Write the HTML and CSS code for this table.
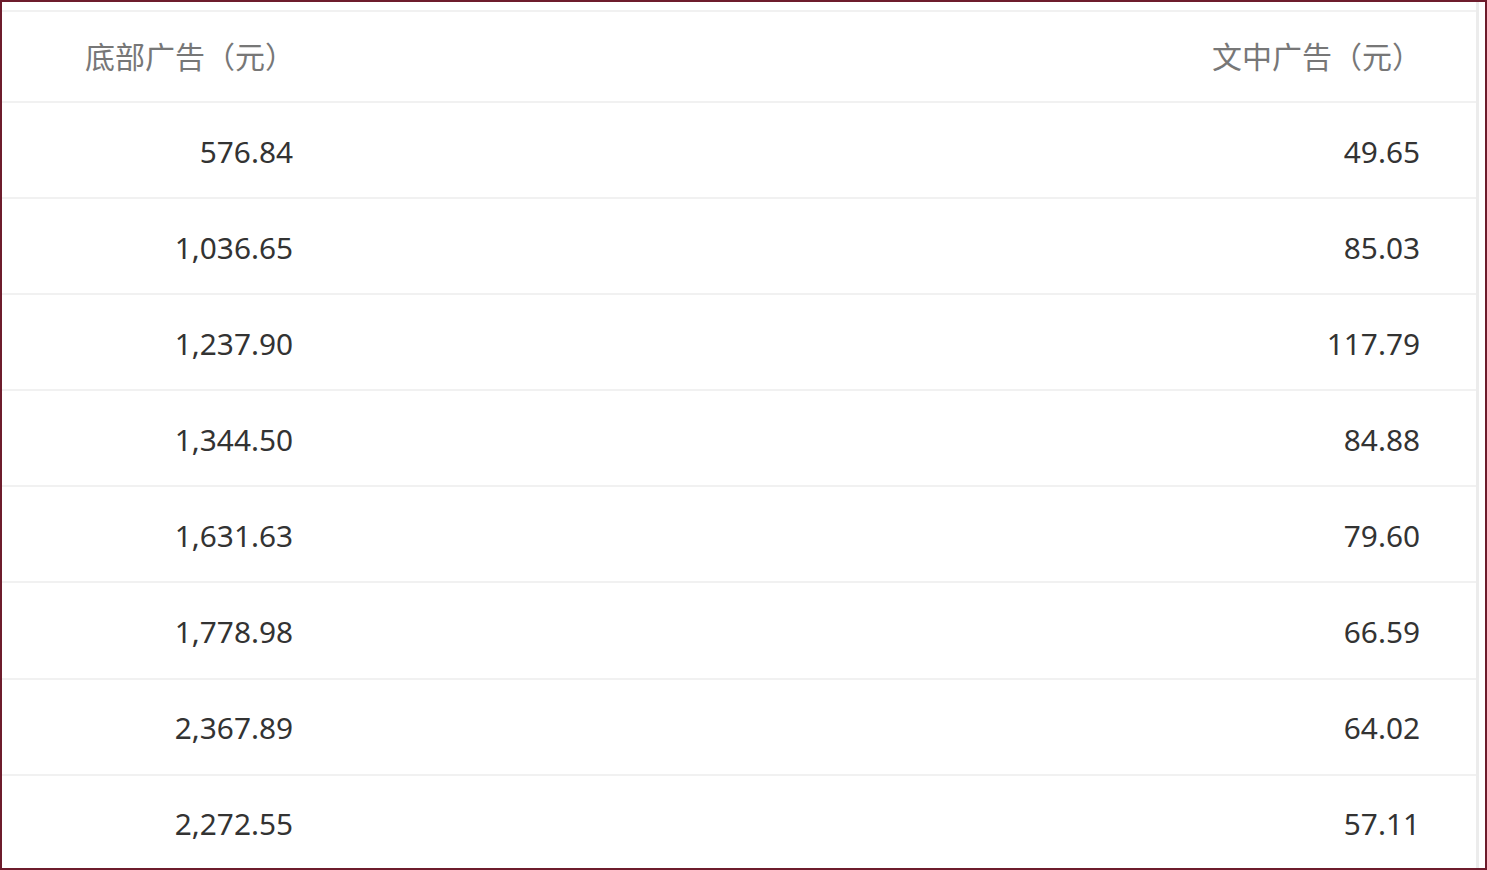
FILE: index.html
```html
<!DOCTYPE html>
<html lang="zh-CN">
<head>
<meta charset="utf-8">
<title>广告收入</title>
<link rel="stylesheet" href="styles.css">
</head>
<body>
<div class="frame">
  <div class="scroller">
    <div class="table">
      <div class="row head">
        <div class="cell left"><span class="hbox">底部广告（元）</span></div>
        <div class="cell right">文中广告（元）</div>
      </div>
      <div class="row"><div class="cell left"><span class="num">576.84</span></div><div class="cell right">49.65</div></div>
      <div class="row"><div class="cell left"><span class="num">1,036.65</span></div><div class="cell right">85.03</div></div>
      <div class="row"><div class="cell left"><span class="num">1,237.90</span></div><div class="cell right">117.79</div></div>
      <div class="row"><div class="cell left"><span class="num">1,344.50</span></div><div class="cell right">84.88</div></div>
      <div class="row"><div class="cell left"><span class="num">1,631.63</span></div><div class="cell right">79.60</div></div>
      <div class="row"><div class="cell left"><span class="num">1,778.98</span></div><div class="cell right">66.59</div></div>
      <div class="row"><div class="cell left"><span class="num">2,367.89</span></div><div class="cell right">64.02</div></div>
      <div class="row"><div class="cell left"><span class="num">2,272.55</span></div><div class="cell right">57.11</div></div>
    </div>
    <div class="gutter"></div>
  </div>
</div>
</body>
</html>
```
FILE: styles.css
```css
html, body {
  margin: 0;
  padding: 0;
  background: #ffffff;
}
.frame {
  width: 1487px;
  height: 870px;
  box-sizing: border-box;
  border: 2px solid #6d1c2c;
  background: #fff;
  overflow: hidden;
  padding-top: 8px;
}
.scroller {
  display: flex;
  height: 100%;
}
.table {
  width: 1474px;
  border-top: 2px solid #f1f1f1;
  font-family: "Noto Sans", "Noto Sans CJK SC", sans-serif;
  font-size: 29.8px;
  color: #333;
}
.gutter {
  width: 3px;
  background: #ececec;
  margin-top: -8px;
}
.row {
  display: grid;
  grid-template-columns: 1fr 1fr;
  height: 94.1px;
  border-bottom: 2px solid #f1f1f1;
  align-items: center;
}
.row.head {
  height: 89px;
  color: #777;
  font-size: 30px;
}
.cell {
  line-height: 1;
}
.cell.left {
  padding-left: 83px;
}
.cell.right {
  text-align: right;
  padding-right: 56px;
}
.num {
  display: inline-block;
  width: 208px;
  text-align: right;
  padding-top: 3px;
}
.row .cell.right {
  padding-top: 3px;
}
.row.head .cell.right {
  padding-top: 0;
  padding-right: 54px;
}
.hbox {
  display: inline-block;
}
```
